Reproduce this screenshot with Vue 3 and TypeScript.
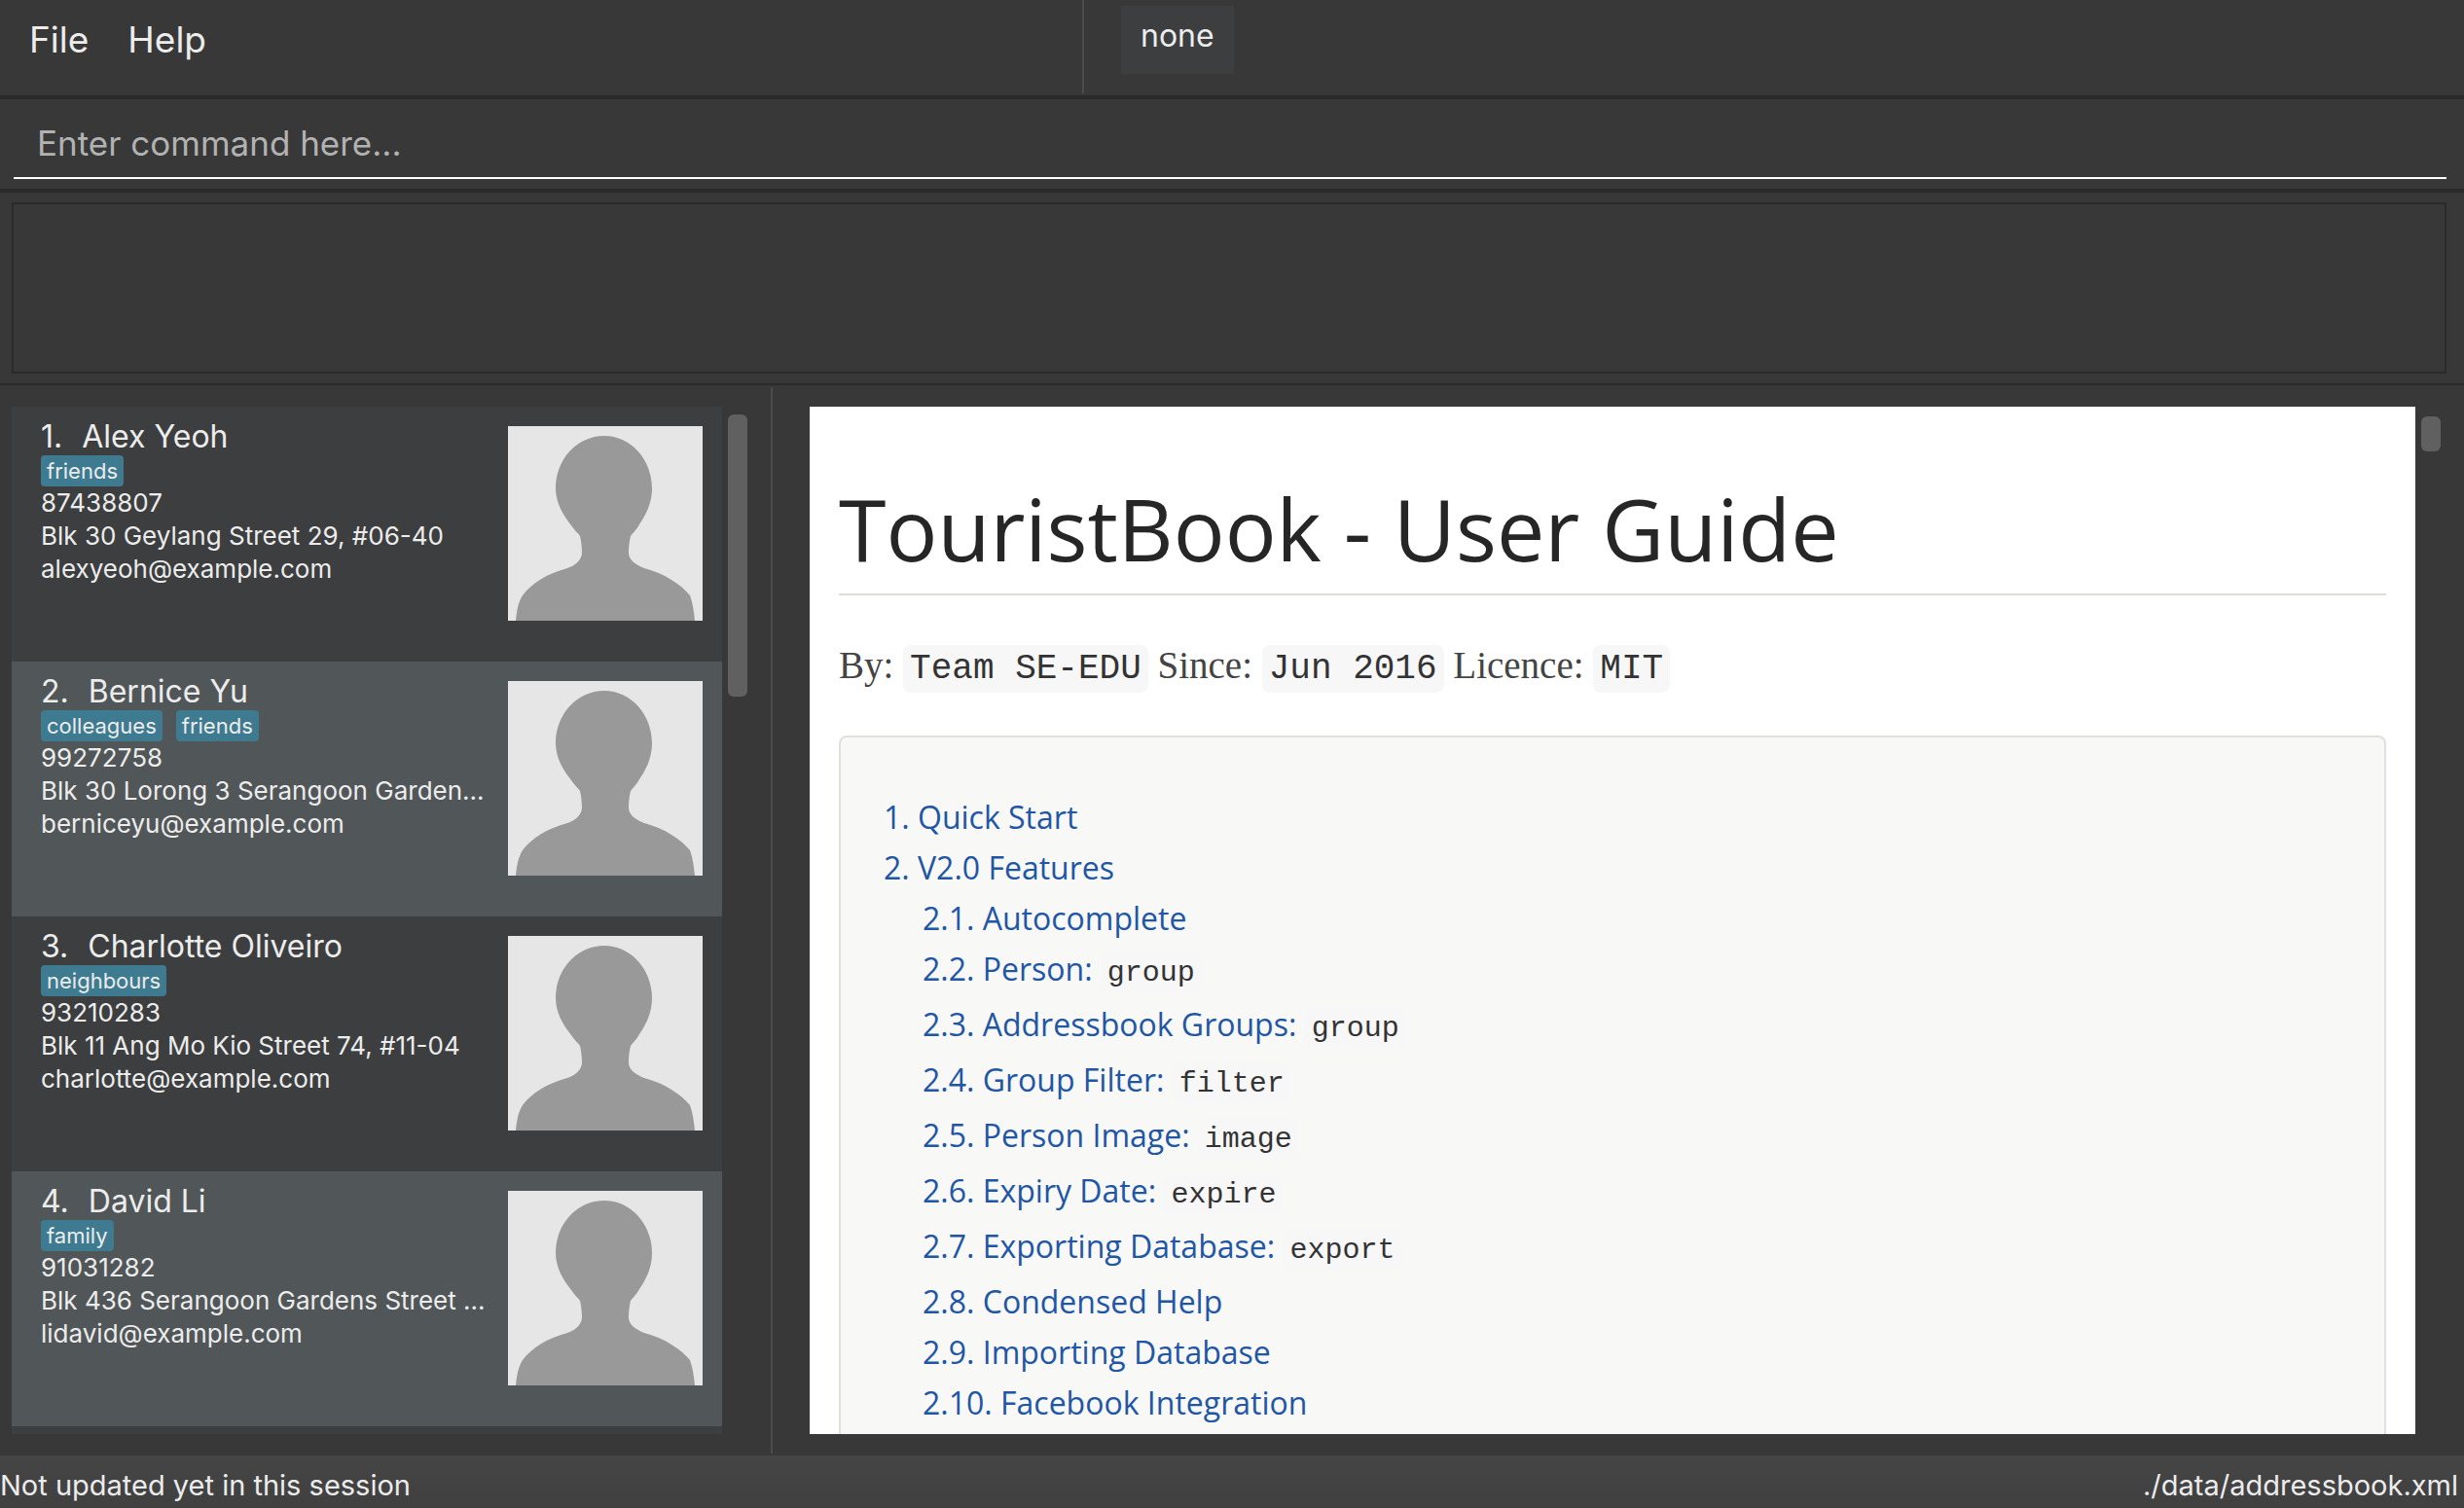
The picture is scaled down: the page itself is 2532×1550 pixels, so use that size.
<script setup lang="ts">
interface Person {
  name: string
  tags: string[]
  phone: string
  address: string
  email: string
}

interface Section {
  label: string
  command?: string
}

const persons: Person[] = [
  { name: 'Alex Yeoh', tags: ['friends'], phone: '87438807', address: 'Blk 30 Geylang Street 29, #06-40', email: 'alexyeoh@example.com' },
  { name: 'Bernice Yu', tags: ['colleagues', 'friends'], phone: '99272758', address: 'Blk 30 Lorong 3 Serangoon Garden...', email: 'berniceyu@example.com' },
  { name: 'Charlotte Oliveiro', tags: ['neighbours'], phone: '93210283', address: 'Blk 11 Ang Mo Kio Street 74, #11-04', email: 'charlotte@example.com' },
  { name: 'David Li', tags: ['family'], phone: '91031282', address: 'Blk 436 Serangoon Gardens Street ...', email: 'lidavid@example.com' },
]

const features: Section[] = [
  { label: '2.1. Autocomplete' },
  { label: '2.2. Person:', command: 'group' },
  { label: '2.3. Addressbook Groups:', command: 'group' },
  { label: '2.4. Group Filter:', command: 'filter' },
  { label: '2.5. Person Image:', command: 'image' },
  { label: '2.6. Expiry Date:', command: 'expire' },
  { label: '2.7. Exporting Database:', command: 'export' },
  { label: '2.8. Condensed Help' },
  { label: '2.9. Importing Database' },
  { label: '2.10. Facebook Integration' },
]
</script>

<template>
  <div class="window">
    <header class="top">
      <nav class="menu">
        <button type="button">File</button>
        <button type="button">Help</button>
      </nav>
      <div class="groups"><span class="group">none</span></div>
    </header>

    <form class="command" @submit.prevent>
      <input type="text" aria-label="Command" placeholder="Enter command here..." />
    </form>

    <section class="result">
      <textarea readonly aria-label="Result"></textarea>
    </section>

    <main class="split">
      <section class="people">
        <ol class="list">
          <li v-for="(person, i) in persons" :key="person.name" class="card">
            <div class="info">
              <h2 class="name"><span>{{ i + 1 }}.</span><span>{{ person.name }}</span></h2>
              <div class="tags">
                <span v-for="tag in person.tags" :key="tag" class="tag">{{ tag }}</span>
              </div>
              <p>{{ person.phone }}</p>
              <p>{{ person.address }}</p>
              <p>{{ person.email }}</p>
            </div>
            <svg class="avatar" viewBox="0 0 200 200" role="img" :aria-label="person.name">
              <rect width="200" height="200" fill="#e6e6e6" />
              <path
                fill="#999"
                d="M99 10C71 10 49 34 49 64C49 79 57 92 65 102C69 108 72 110 74 113C75 117 76 124 76 130C76 137 70 143 61 146C39 152 24 162 15 174C10 182 9 191 8 200H192C191 191 190 182 187 174C178 163 162 152 140 146C130 142 124 137 124 130C124 124 125 117 126 113C128 110 131 108 135 101C141 92 148 80 148 64C148 34 126 10 99 10Z"
              />
            </svg>
          </li>
        </ol>
        <div class="thumb thumb-long"></div>
      </section>

      <section class="browser">
        <article class="guide">
          <h1>TouristBook - User Guide</h1>
          <p class="byline">
            By: <code>Team SE-EDU</code> Since: <code>Jun 2016</code> Licence: <code>MIT</code>
          </p>
          <nav class="toc">
            <ul>
              <li><a href="#quick-start">1. Quick Start</a></li>
              <li>
                <a href="#features">2. V2.0 Features</a>
                <ul>
                  <li v-for="item in features" :key="item.label" :class="{ coded: item.command }">
                    <a href="#features">{{ item.label }}<template v-if="item.command">&nbsp;<code>{{ item.command }}</code></template></a>
                  </li>
                </ul>
              </li>
            </ul>
          </nav>
        </article>
        <div class="thumb thumb-short"></div>
      </section>
    </main>

    <footer class="status">
      <span>Not updated yet in this session</span>
      <span>./data/addressbook.xml</span>
    </footer>
  </div>
</template>

<style>
body {
  margin: 0;
  background: #383838;
}
</style>

<style scoped>
* {
  box-sizing: border-box;
}

h1,
h2,
p,
ul,
ol {
  margin: 0;
  padding: 0;
  font-weight: 400;
  list-style: none;
}

.window {
  display: flex;
  flex-direction: column;
  height: 100vh;
  overflow: hidden;
  background: #383838;
  color: #ececec;
  font-family: Inter, "Liberation Sans", sans-serif;
}

.top {
  display: grid;
  grid-template-columns: 1114fr 1418fr;
  padding-bottom: 2px;
  border-bottom: 4px solid #2a2a2a;
}

.menu {
  display: flex;
  gap: 40px;
  height: 96px;
  padding: 18px 30px;
  border-right: 2px solid #4c4c4c;
}

.menu button {
  height: 46px;
  padding: 0;
  border: 0;
  background: none;
  color: inherit;
  font: 37px/46px Inter, "Liberation Sans", sans-serif;
}

.groups {
  padding: 6px 38px;
}

.group {
  display: inline-block;
  height: 70px;
  padding: 10px 20px;
  background: #3c3e3f;
  font-size: 32px;
  line-height: 42px;
}

.command {
  padding: 8px 18px 10px 14px;
  border-bottom: 4px solid #2a2a2a;
}

.command input {
  display: block;
  width: 100%;
  height: 74px;
  padding: 2px 24px 0;
  border: 0;
  border-bottom: 2px solid #fff;
  outline: 0;
  background: none;
  color: inherit;
  font: 35px/44px Inter, "Liberation Sans", sans-serif;
}

.command input::placeholder {
  color: #b2b2b2;
  opacity: 1;
}

.result {
  padding: 10px 18px 10px 12px;
  border-bottom: 2px solid #2a2a2a;
}

.result textarea {
  display: block;
  width: 100%;
  height: 176px;
  border: 2px solid #2a2a2a;
  outline: 0;
  background: none;
  resize: none;
}

.split {
  display: grid;
  flex: 1;
  grid-template-columns: 794fr 1738fr;
  grid-template-rows: 100%;
  min-height: 0;
  padding: 2px 0;
}

.people {
  display: flex;
  gap: 6px;
  padding: 20px 24px 20px 12px;
  border-right: 2px solid #4c4c4c;
}

.list {
  flex: 1;
  overflow: hidden;
  background: #3c3e3f;
}

.card {
  display: flex;
  justify-content: space-between;
  height: 262px;
  padding: 12px 20px 0 30px;
  white-space: nowrap;
}

.card:nth-child(even) {
  background: #515658;
}

.info {
  min-width: 0;
}

.info p {
  font-size: 26px;
  line-height: 34px;
}

.name {
  display: flex;
  gap: 20px;
  font-size: 32px;
  line-height: 38px;
}

.tags {
  display: flex;
  gap: 14px;
}

.tag {
  padding: 0 6px;
  border-radius: 4px;
  background: #3e7b91;
  font-size: 22px;
  line-height: 32px;
}

.avatar {
  flex: none;
  width: 200px;
  height: 200px;
  margin-top: 8px;
}

.thumb {
  flex: none;
  width: 20px;
  border-radius: 6px;
  background: #606060;
}

.thumb-long {
  height: 290px;
  margin-top: 8px;
}

.thumb-short {
  height: 36px;
  margin-top: 10px;
}

.browser {
  display: flex;
  gap: 6px;
  padding: 20px 24px 20px 38px;
}

.guide {
  flex: 1;
  overflow: hidden;
  padding: 72px 30px 0;
  background: #fff;
  color: #444;
  font-family: "Liberation Serif", serif;
}

.guide h1 {
  padding-bottom: 14px;
  border-bottom: 2px solid #ddddd8;
  color: #262626;
  font: 88px/106px "Open Sans", sans-serif;
}

.byline {
  padding: 40px 0 36px;
  font-size: 39px;
  line-height: 64px;
}

code {
  padding: 4px 7px;
  border-radius: 8px;
  background: #f7f7f8;
  color: #333;
  font-family: "Liberation Mono", monospace;
  font-size: 36px;
}

.toc {
  padding: 56px 44px;
  border: 2px solid #e0e0dc;
  border-radius: 8px;
  background: #f8f8f7;
  font: 32px/52px "Open Sans", sans-serif;
}

.toc ul ul {
  padding-left: 40px;
}

.toc .coded {
  height: 57px;
}

.toc a {
  color: #2156a5;
  text-decoration: none;
}

.toc code {
  font-size: 30px;
  line-height: 30px;
}

.status {
  display: flex;
  justify-content: space-between;
  height: 54px;
  padding: 0 6px 0 0;
  background: linear-gradient(#454545, #404040);
  font-size: 29px;
  line-height: 62px;
}
</style>
